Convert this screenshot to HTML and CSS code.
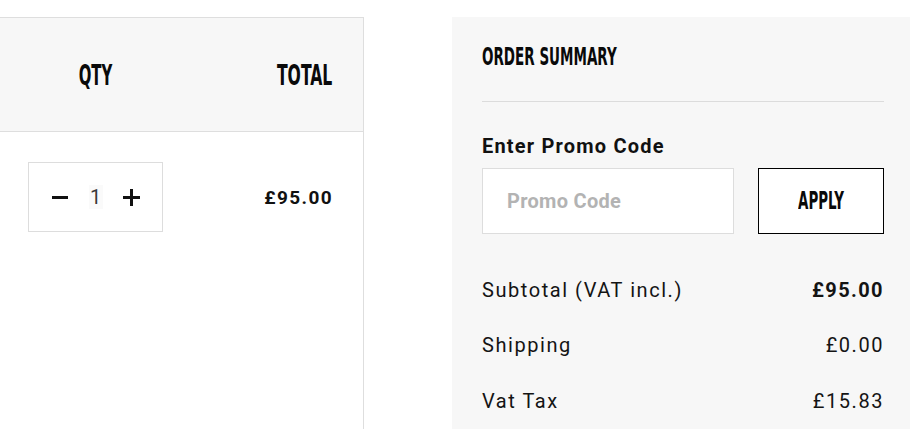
FILE: index.html
```html
<!DOCTYPE html>
<html lang="en">
<head>
<meta charset="utf-8">
<title>Cart</title>
<link rel="stylesheet" href="styles.css">
</head>
<body>
<div class="page">
  <section class="cart">
    <div class="cart-head">
      <div class="col-qty head-cell center"><span class="cond cond-center head-text">QTY</span></div>
      <div class="col-total head-cell right"><span class="cond cond-right head-text total-text">TOTAL</span></div>
    </div>
    <div class="cart-row">
      <div class="col-qty">
        <div class="qty-box">
          <button class="qty-btn" type="button" aria-label="Decrease">
            <svg width="16" height="16" viewBox="0 0 16 16"><path d="M0 8.5H16" stroke="#111" stroke-width="3"/></svg>
          </button>
          <span class="qty-val">1</span>
          <button class="qty-btn" type="button" aria-label="Increase">
            <svg width="17" height="17" viewBox="0 0 17 17"><path d="M0 8.5H17M8.5 0V17" stroke="#111" stroke-width="3"/></svg>
          </button>
        </div>
      </div>
      <div class="col-total price">£95.00</div>
    </div>
  </section>

  <aside class="summary">
    <div class="summary-title"><span class="cond cond-left title-text">ORDER SUMMARY</span></div>
    <div class="promo-label">Enter Promo Code</div>
    <div class="promo-row">
      <input class="promo-input" type="text" placeholder="Promo Code">
      <button class="promo-btn" type="button"><span class="cond cond-center btn-text">APPLY</span></button>
    </div>
    <div class="sum-rows">
      <div class="sum-row"><span>Subtotal (VAT incl.)</span><span class="strong">£95.00</span></div>
      <div class="sum-row"><span>Shipping</span><span>£0.00</span></div>
      <div class="sum-row"><span>Vat Tax</span><span>£15.83</span></div>
    </div>
  </aside>
</div>
</body>
</html>
```

FILE: styles.css
```css
* { box-sizing: border-box; }

html, body {
  margin: 0;
  padding: 0;
  background: #ffffff;
}

body {
  font-family: Roboto, "Liberation Sans", sans-serif;
  color: #111111;
  width: 910px;
  height: 429px;
  overflow: hidden;
}

.page {
  display: flex;
  align-items: flex-start;
  padding-top: 17px;
}

/* condensed display headings */
.cond {
  display: block;
  font-family: "DejaVu Sans Condensed", "Liberation Sans", sans-serif;
  font-weight: 700;
  color: #0a0a0a;
  transform: scaleX(0.6);
  white-space: nowrap;
}
.cond-left { transform-origin: left center; }
.cond-right { transform-origin: right center; }
.cond-center { transform-origin: center center; }

/* left cart table */
.cart {
  width: 364px;
  height: 412px;
  border-top: 1px solid #dedede;
  border-right: 1px solid #dedede;
}

.cart-head {
  display: flex;
  align-items: center;
  height: 114px;
  background: #f7f7f7;
  border-bottom: 1px solid #dedede;
}

.head-cell {
  display: flex;
  align-items: center;
  height: 30px;
}
.head-cell.center { justify-content: center; }
.head-cell.right { justify-content: flex-end; }

.head-text {
  font-size: 29px;
  line-height: 30px;
  transform: scaleX(0.57);
}
.head-text.total-text {
  transform: scaleX(0.6);
}

.col-qty {
  width: 135px;
  margin-left: 28px;
  text-align: center;
}

.col-total {
  flex: 1;
  text-align: right;
  padding-right: 31px;
}

.cart-row {
  display: flex;
  align-items: center;
  padding-top: 30px;
}

.qty-box {
  display: flex;
  align-items: center;
  justify-content: center;
  gap: 20px;
  height: 70px;
  border: 1px solid #dddddd;
  background: #ffffff;
}

.qty-btn {
  display: flex;
  align-items: center;
  justify-content: center;
  width: 17px;
  height: 20px;
  padding: 0;
  border: 0;
  background: transparent;
}

.qty-val {
  font-size: 20px;
  font-weight: 400;
  color: #3a3a3a;
  width: 14px;
  text-align: center;
  background: #fafafa;
}

.price {
  font-size: 19px;
  font-weight: 700;
  letter-spacing: 1.4px;
  padding-right: 30px;
}

/* right summary */
.summary {
  margin-left: 88px;
  flex: 1;
  height: 412px;
  background: #f7f7f7;
  padding: 28px 26px 0 30px;
}

.summary-title {
  display: flex;
  align-items: center;
  height: 57px;
  padding-bottom: 32px;
  border-bottom: 1px solid #dcdcdc;
}

.title-text {
  font-size: 25px;
  line-height: 24px;
}

.promo-label {
  margin-top: 32px;
  margin-bottom: 10px;
  font-size: 20px;
  line-height: 24px;
  font-weight: 700;
  letter-spacing: 1.2px;
}

.promo-row {
  display: flex;
  gap: 24px;
}

.promo-input {
  width: 252px;
  height: 66px;
  border: 1px solid #dddddd;
  background: #ffffff;
  padding: 0 0 0 24px;
  font-family: Roboto, "Liberation Sans", sans-serif;
  font-size: 20px;
  font-weight: 700;
  letter-spacing: 0.3px;
  outline: none;
}
.promo-input::placeholder {
  color: #b3b3b3;
}

.promo-btn {
  width: 126px;
  height: 66px;
  border: 1px solid #000000;
  background: #ffffff;
  padding: 0;
  display: flex;
  align-items: center;
  justify-content: center;
}

.btn-text {
  font-size: 24px;
  line-height: 24px;
  transform: scaleX(0.62);
}

.sum-rows {
  margin-top: 28px;
}

.sum-row {
  display: flex;
  justify-content: space-between;
  align-items: center;
  height: 55.5px;
  font-size: 20px;
  letter-spacing: 1.55px;
  color: #141414;
}

.sum-row .strong {
  font-weight: 700;
  letter-spacing: 1.4px;
}
```
